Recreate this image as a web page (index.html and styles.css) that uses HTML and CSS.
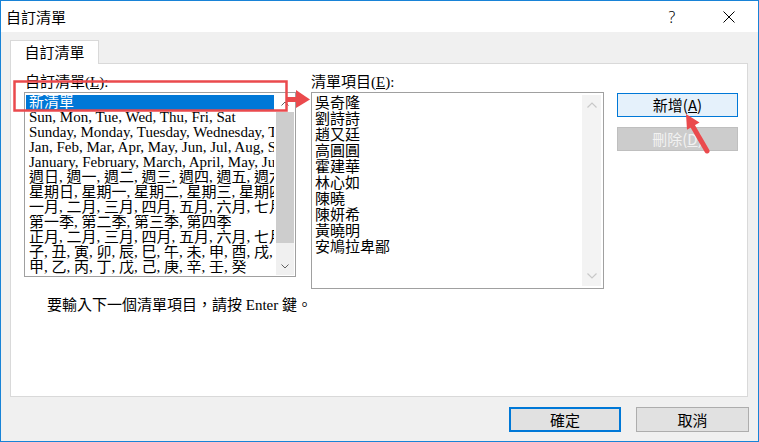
FILE: index.html
```html
<!DOCTYPE html>
<html lang="zh-Hant">
<head>
<meta charset="utf-8">
<title>自訂清單</title>
<link rel="stylesheet" href="styles.css">
</head>
<body>
<div class="window">
  <div class="titlebar">
    <span class="title">自訂清單</span>
    <span class="tb-btn help">?</span>
    <span class="tb-btn close"><svg width="12" height="12" viewBox="0 0 12 12"><path d="M0.5 0.5 L11.5 11.5 M11.5 0.5 L0.5 11.5" stroke="#000" stroke-width="1" fill="none"/></svg></span>
  </div>
  <div class="client">
    <div class="tabs"><div class="tab">自訂清單</div></div>
    <div class="panel">
      <div class="grid">
        <div class="lbl lbl-l">自訂清單(<u>L</u>):</div>
        <div class="lbl lbl-r">清單項目(<u>E</u>):</div>
        <div class="listbox">
          <div class="items">
            <div class="item sel">新清單</div>
            <div class="item">Sun, Mon, Tue, Wed, Thu, Fri, Sat</div>
            <div class="item">Sunday, Monday, Tuesday, Wednesday, Thursday, Friday, Saturday</div>
            <div class="item">Jan, Feb, Mar, Apr, May, Jun, Jul, Aug, Sep, Oct, Nov, Dec</div>
            <div class="item">January, February, March, April, May, June, July, August</div>
            <div class="item">週日, 週一, 週二, 週三, 週四, 週五, 週六</div>
            <div class="item">星期日, 星期一, 星期二, 星期三, 星期四</div>
            <div class="item">一月, 二月, 三月, 四月, 五月, 六月, 七月</div>
            <div class="item">第一季, 第二季, 第三季, 第四季</div>
            <div class="item">正月, 二月, 三月, 四月, 五月, 六月, 七月</div>
            <div class="item">子, 丑, 寅, 卯, 辰, 巳, 午, 未, 申, 酉, 戌, 亥</div>
            <div class="item">甲, 乙, 丙, 丁, 戊, 己, 庚, 辛, 壬, 癸</div>
          </div>
          <div class="vscroll">
            <div class="sb-btn"><svg width="8" height="5" viewBox="0 0 8 5"><path d="M0.5 4.5 L4 1 L7.5 4.5" stroke="#606060" fill="none"/></svg></div>
            <div class="thumb"></div>
            <div class="track"></div>
            <div class="sb-btn"><svg width="8" height="5" viewBox="0 0 8 5"><path d="M0.5 0.5 L4 4 L7.5 0.5" stroke="#606060" fill="none"/></svg></div>
          </div>
        </div>
        <div class="textbox">
          <div class="entries">
            <div class="entry">吳奇隆</div>
            <div class="entry">劉詩詩</div>
            <div class="entry">趙又廷</div>
            <div class="entry">高圓圓</div>
            <div class="entry">霍建華</div>
            <div class="entry">林心如</div>
            <div class="entry">陳曉</div>
            <div class="entry">陳妍希</div>
            <div class="entry">黃曉明</div>
            <div class="entry">安鳩拉卑鄙</div>
          </div>
          <div class="vscroll dis">
            <div class="sb-btn"><svg width="10" height="6" viewBox="0 0 10 6"><path d="M0.5 5.5 L5 1 L9.5 5.5" stroke="#c8c8c8" stroke-width="1.2" fill="none"/></svg></div>
            <div class="track"></div>
            <div class="sb-btn"><svg width="10" height="6" viewBox="0 0 10 6"><path d="M0.5 0.5 L5 5 L9.5 0.5" stroke="#c8c8c8" stroke-width="1.2" fill="none"/></svg></div>
          </div>
        </div>
        <div class="actions">
          <button class="btn btn-add">新增(<u>A</u>)</button>
          <button class="btn btn-del" disabled>刪除(<u>D</u>)</button>
        </div>
      </div>
      <p class="hint">要輸入下一個清單項目，請按 Enter 鍵。</p>
    </div>
    <div class="footer">
      <button class="btn dlg ok">確定</button>
      <button class="btn dlg">取消</button>
    </div>
  </div>
</div>
<svg class="annot" width="759" height="442" viewBox="0 0 759 442">
  <rect x="14.5" y="81.5" width="272" height="29" fill="none" stroke="#ea4a4d" stroke-width="2.5"/>
  <rect x="287" y="97" width="10" height="5" fill="#ea4a4d"/>
  <polygon points="296,90 310,99.5 296,108" fill="#ea4a4d"/>
  <line x1="707" y1="151" x2="692" y2="125" stroke="#ea4a4d" stroke-width="5" stroke-linecap="round"/>
  <polygon points="686,114 699.5,122.5 687,129.8" fill="#ea4a4d"/>
</svg>
</body>
</html>
```

FILE: styles.css
```css
* { box-sizing: border-box; margin: 0; padding: 0; }
html, body { width: 759px; height: 442px; overflow: hidden; }
body {
  position: relative;
  font-family: "Noto Sans CJK TC", sans-serif;
  color: #000;
  background: #fff;
}
.window {
  width: 759px;
  height: 442px;
  border: 1px solid #1883d7;
  background: #f0f0f0;
  display: flex;
  flex-direction: column;
}
.titlebar {
  height: 31px;
  flex: none;
  background: #fff;
  display: flex;
  align-items: center;
}
.title { flex: 1; font-size: 15px; line-height: 20px; margin-left: 5px; }
.tb-btn {
  width: 46px;
  height: 31px;
  display: flex;
  align-items: center;
  justify-content: center;
}
.help { font-family: "Noto Sans", sans-serif; font-weight: 300; font-size: 16px; margin-right: 11px; }
.close { margin-right: 6px; }

.client {
  flex: 1;
  padding: 8px 9px 0 9px;
  display: flex;
  flex-direction: column;
}
.tabs { display: flex; }
.tab {
  position: relative;
  z-index: 1;
  width: 89px;
  height: 24px;
  margin-bottom: -1px;
  background: #fff;
  border: 1px solid #d9d9d9;
  border-bottom: none;
  font-size: 15px;
  line-height: 22px;
  text-align: center;
}
.panel {
  width: 738px;
  height: 334px;
  background: #fff;
  border: 1px solid #d9d9d9;
  padding: 9px 0 0 13px;
}
.grid {
  display: grid;
  grid-template-columns: 272px 293px 121px;
  grid-template-rows: 19px auto;
  column-gap: 15px;
  align-items: start;
}
.lbl-l { grid-column: 1; grid-row: 1; }
.lbl-r { grid-column: 2; grid-row: 1; margin-left: -1px; }
.listbox { grid-column: 1; grid-row: 2; }
.textbox { grid-column: 2; grid-row: 2; }
.actions { grid-column: 3; grid-row: 2; margin-left: -2px; }
.lbl {
  font-family: "Liberation Serif", "Noto Sans CJK TC", serif;
  font-size: 15px;
  line-height: 19px;
  padding-left: 1px;
  white-space: nowrap;
}

.listbox {
  height: 185px;
  border: 1px solid #a0a0a0;
  padding: 1px;
  display: flex;
}
.items {
  flex: 1;
  min-width: 0;
  padding-top: 1px;
  overflow: hidden;
  font-family: "Liberation Serif", "Noto Sans CJK TC", serif;
  font-size: 15px;
}
.item {
  height: 15px;
  line-height: 15px;
  white-space: nowrap;
  overflow: hidden;
  padding-left: 3px;
}
.item.sel { background: #0078d7; color: #fff; }

.vscroll {
  width: 18px;
  flex: none;
  margin-left: 2px;
  display: flex;
  flex-direction: column;
  background: #f0f0f0;
}
.sb-btn {
  height: 18px;
  flex: none;
  display: flex;
  align-items: center;
  justify-content: center;
}
.listbox .sb-btn:first-child { background: #fff; }
.thumb { height: 131px; flex: none; background: #cdcdcd; }
.track { flex: 1; }

.textbox {
  height: 197px;
  border: 1px solid #a0a0a0;
  padding: 2px 2px 1px 1px;
  display: flex;
}
.entries {
  flex: 1;
  min-width: 0;
  padding-left: 2px;
  font-family: "Liberation Serif", "Noto Sans CJK TC", serif;
  font-size: 15px;
}
.entry { height: 16px; line-height: 16px; white-space: nowrap; }
.vscroll.dis { width: 19px; background: #f3f3f3; margin-bottom: 1px; }
.vscroll.dis .sb-btn { height: 20px; }

.actions { display: flex; flex-direction: column; gap: 10px; padding-top: 1px; }
.btn {
  font-family: "Noto Sans CJK TC", sans-serif;
  font-size: 15px;
  line-height: 20px;
  height: 24px;
  color: #000;
  text-align: center;
}
.btn u { text-decoration: underline; }
.btn-add { width: 121px; background: #e5f1fb; border: 1px solid #0078d7; }
.btn-del {
  width: 121px;
  background: #cccccc;
  border: 1px solid #bfbfbf;
  color: #f2f2f2;
}

.hint {
  margin-top: 8px;
  margin-left: 23px;
  font-family: "Liberation Serif", "Noto Sans CJK TC", serif;
  font-size: 15px;
  line-height: 17px;
}

.footer {
  display: flex;
  justify-content: flex-end;
  gap: 15px;
  margin-top: 10px;
}
.dlg {
  width: 113px;
  height: 25px;
  background: #e1e1e1;
  border: 1px solid #adadad;
  line-height: 21px;
}
.dlg.ok { width: 112px; border: 2px solid #0078d7; line-height: 19px; }

.annot { position: absolute; left: 0; top: 0; pointer-events: none; }
```
